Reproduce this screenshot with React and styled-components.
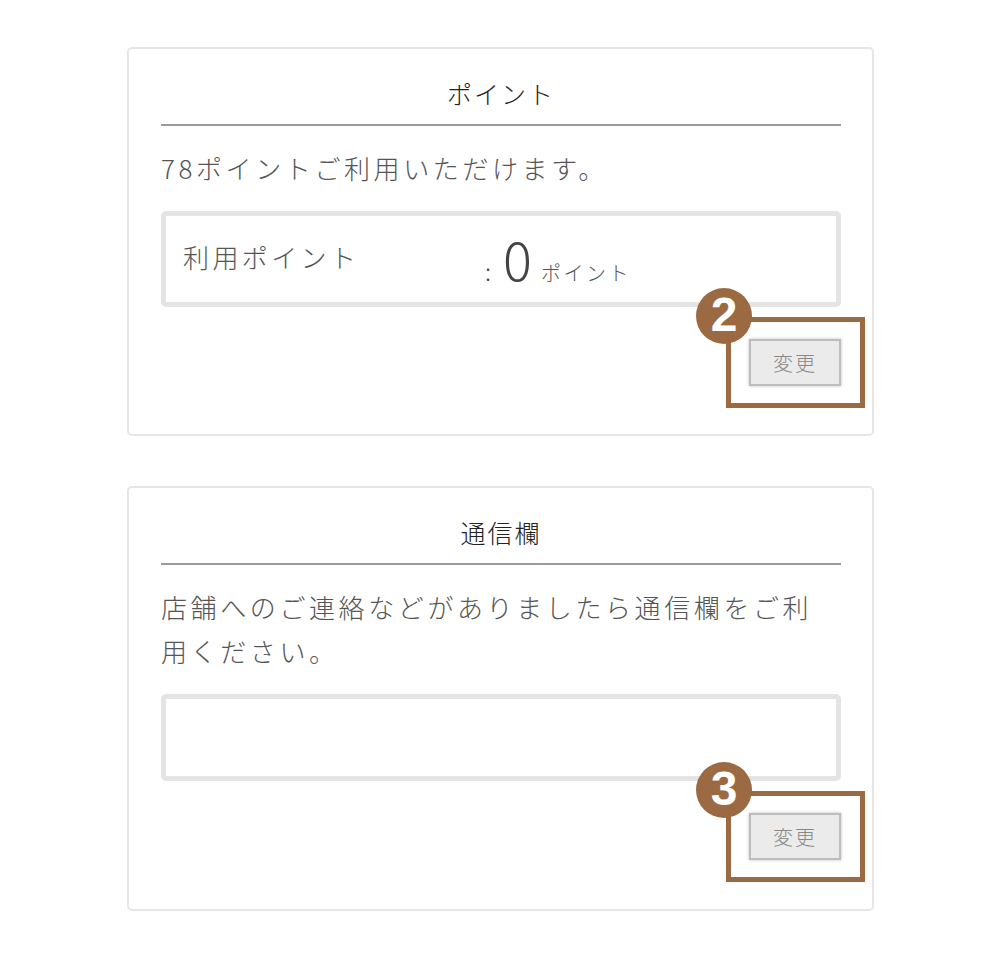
import React from 'react'
import styled, { createGlobalStyle } from 'styled-components'

const GlobalStyle = createGlobalStyle`
  body {
    margin: 0;
    background: #fff;
    font-family: "Noto Sans CJK JP", "Noto Sans", sans-serif;
    font-weight: 300;
    color: #444;
  }
`

const Page = styled.div`
  width: 747px;
  margin: 47px 0 0 127px;
  display: flex;
  flex-direction: column;
  gap: 50px;
  padding-bottom: 40px;
`

const Card = styled.section`
  border: 2px solid #e6e6e6;
  border-radius: 5px;
  padding: 0 31px ${(p) => p.$bottom}px 32px;
`

const Title = styled.h2`
  margin: 28px 0 0;
  padding-bottom: 15px;
  border-bottom: 2px solid #9a9a9a;
  font-size: 25px;
  font-weight: 300;
  line-height: 32px;
  letter-spacing: 2px;
  text-align: center;
  color: #222;
`

const Lead = styled.p`
  margin: 20px 0 0;
  font-size: 26px;
  line-height: 44px;
  letter-spacing: 3.6px;
  color: #555;
`

const InputBox = styled.div`
  margin-top: 21px;
  height: ${(p) => p.$height}px;
  box-sizing: border-box;
  border: 5px solid #e4e4e4;
  border-radius: 5px;
  display: flex;
  align-items: center;
  padding: 0 17px;
`

const Label = styled.span`
  width: 302px;
  font-size: 26px;
  letter-spacing: 3.4px;
  color: #555;
  margin-bottom: 6px;
`

const Value = styled.div`
  display: flex;
  align-items: baseline;
  color: #444;
`

const Colon = styled.span`
  font-size: 24px;
  margin-right: 12px;
`

const Big = styled.span`
  font-size: 54px;
  font-weight: 300;
  line-height: 1;
  margin-right: 9px;
`

const Unit = styled.span`
  font-size: 20px;
  letter-spacing: 2.5px;
  color: #555;
`

const Actions = styled.div`
  margin-top: 32px;
  display: flex;
  justify-content: flex-end;
`

const ButtonWrap = styled.div`
  position: relative;
`

const Button = styled.button`
  display: block;
  width: 92px;
  height: 47px;
  background: #ebebeb;
  border: 2px solid #bdbdbd;
  box-shadow: 0 0 3px rgba(0, 0, 0, 0.25);
  font-family: "Noto Sans CJK JP", sans-serif;
  font-weight: 300;
  font-size: 20px;
  letter-spacing: 2px;
  color: #888;
  padding: 0;
  cursor: pointer;
`

const Frame = styled.div`
  position: absolute;
  left: -23px;
  top: -22px;
  right: -24px;
  bottom: -22px;
  border: 5px solid #9b6a42;
  pointer-events: none;
`

const Badge = styled.div`
  position: absolute;
  left: -53px;
  top: -51px;
  width: 56px;
  height: 56px;
  border-radius: 50%;
  background: #9b6a42;
  color: #fff;
  font-family: "Liberation Sans", Arial, sans-serif;
  font-weight: 700;
  font-size: 48px;
  line-height: 54px;
  text-align: center;
`

const ChangeButton = ({ num }) => (
  <Actions>
    <ButtonWrap>
      <Button>変更</Button>
      <Frame />
      <Badge>{num}</Badge>
    </ButtonWrap>
  </Actions>
)

export default function App() {
  return (
    <>
      <GlobalStyle />
      <Page>
        <Card $bottom={48}>
          <Title>ポイント</Title>
          <Lead>78ポイントご利用いただけます。</Lead>
          <InputBox $height={96}>
            <Label>利用ポイント</Label>
            <Value>
              <Colon>:</Colon>
              <Big>0</Big>
              <Unit>ポイント</Unit>
            </Value>
          </InputBox>
          <ChangeButton num="2" />
        </Card>
        <Card $bottom={49}>
          <Title>通信欄</Title>
          <Lead>店舗へのご連絡などがありましたら通信欄をご利用ください。</Lead>
          <InputBox $height={87} />
          <ChangeButton num="3" />
        </Card>
      </Page>
    </>
  )
}
